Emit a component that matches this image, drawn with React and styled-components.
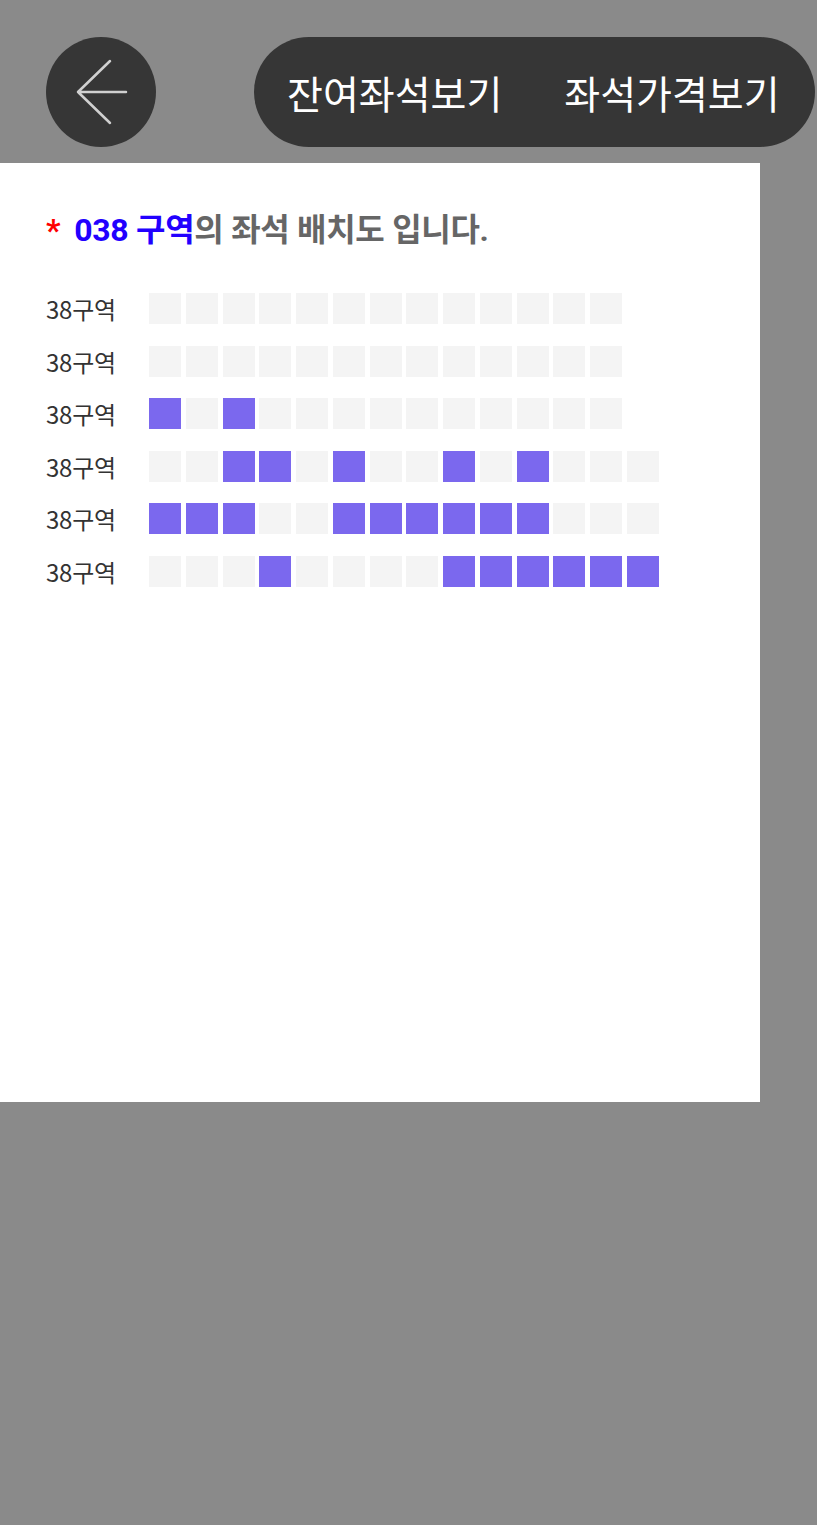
import React from "react";
import styled, { createGlobalStyle } from "styled-components";

const GlobalStyle = createGlobalStyle`
  body {
    margin: 0;
    background: #8a8a8a;
    font-family: "Noto Sans CJK KR", "Noto Sans", sans-serif;
  }
`;

const rows = [
  "0000000000000",
  "0000000000000",
  "1010000000000",
  "00110100101000",
  "11100111111000",
  "00010000111111",
];

const App = () => {
  return (
    <Page>
      <GlobalStyle />
      <Header>
        <BackButton aria-label="back">
          <svg width="110" height="110" viewBox="0 0 110 110">
            <path
              d="M64 24 L32 55 L64 86 M32 55 L80 55"
              stroke="#d0d0d0"
              strokeWidth="2.5"
              fill="none"
              strokeLinecap="round"
              strokeLinejoin="round"
            />
          </svg>
        </BackButton>
        <Pill>
          <PillItem>잔여좌석보기</PillItem>
          <PillItem>좌석가격보기</PillItem>
        </Pill>
      </Header>
      <Panel>
        <Title>
          <Star>*</Star>
          <Zone>038 구역</Zone>의 좌석 배치도 입니다.
        </Title>
        <Rows>
          {rows.map((row, i) => (
            <Row key={i}>
              <Label>38구역</Label>
              <Seats>
                {row.split("").map((s, j) => (
                  <Seat key={j} $taken={s === "1"} />
                ))}
              </Seats>
            </Row>
          ))}
        </Rows>
      </Panel>
    </Page>
  );
};

const Page = styled.div`
  width: 817px;
  min-height: 1525px;
  background: #8a8a8a;
`;

const Header = styled.div`
  display: flex;
  align-items: center;
  padding: 37px 0 0 46px;
  gap: 98px;
`;

const BackButton = styled.div`
  width: 110px;
  height: 110px;
  border-radius: 50%;
  background: #363636;
  flex-shrink: 0;
  svg {
    display: block;
  }
`;

const Pill = styled.div`
  display: flex;
  align-items: center;
  gap: 62px;
  height: 110px;
  width: 561px;
  box-sizing: border-box;
  padding-left: 33px;
  border-radius: 55px;
  background: #363636;
  flex-shrink: 0;
`;

const PillItem = styled.span`
  color: #fff;
  font-size: 39px;
  line-height: 1;
  white-space: nowrap;
`;

const Panel = styled.div`
  margin-top: 16px;
  width: 760px;
  height: 939px;
  background: #fff;
  box-sizing: border-box;
  padding: 46px 0 0 46px;
`;

const Title = styled.div`
  font-family: Roboto, "Noto Sans CJK KR", sans-serif;
  font-weight: 700;
  font-size: 32px;
  line-height: 42px;
  color: #666;
  letter-spacing: -0.3px;
  white-space: nowrap;
`;

const Star = styled.span`
  color: #ff0000;
  margin-right: 14px;
`;

const Zone = styled.span`
  color: #2200ff;
`;

const Rows = styled.div`
  display: flex;
  flex-direction: column;
  gap: 21.5px;
  margin-top: 42px;
`;

const Row = styled.div`
  display: flex;
  align-items: center;
`;

const Label = styled.span`
  width: 103px;
  font-size: 24px;
  color: #333;
  letter-spacing: -0.2px;
  line-height: 31px;
`;

const Seats = styled.div`
  display: flex;
  gap: 4.75px;
`;

const Seat = styled.div`
  width: 32px;
  height: 31px;
  background: ${(p) => (p.$taken ? "#7b68ee" : "#f4f4f4")};
`;

export default App;
